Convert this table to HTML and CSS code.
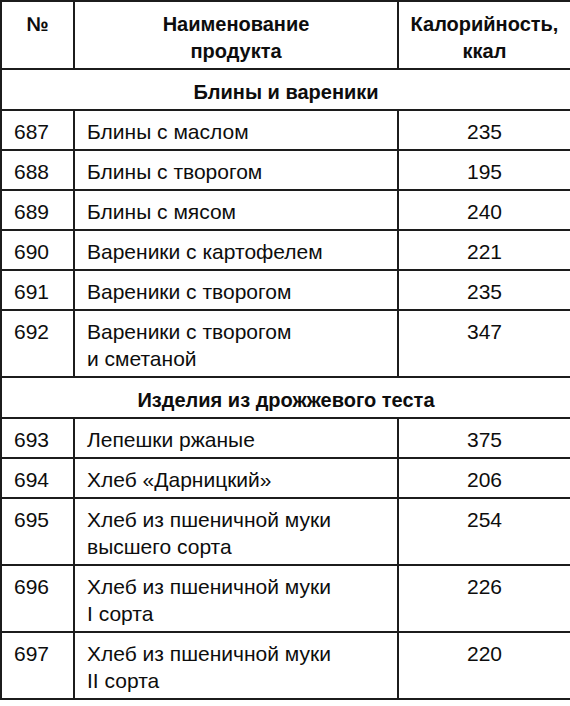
FILE: index.html
```html
<!DOCTYPE html>
<html lang="ru">
<head>
<meta charset="utf-8">
<title>Калорийность</title>
<link rel="stylesheet" href="styles.css">
</head>
<body>
<table class="cal">
  <colgroup>
    <col class="c-num">
    <col class="c-name">
    <col class="c-kcal">
  </colgroup>
  <thead>
    <tr class="head">
      <th>№</th>
      <th>Наименование<br>продукта</th>
      <th>Калорийность,<br>ккал</th>
    </tr>
  </thead>
  <tbody>
    <tr class="section"><td colspan="3">Блины и вареники</td></tr>
    <tr><td>687</td><td>Блины с маслом</td><td class="k">235</td></tr>
    <tr><td>688</td><td>Блины с творогом</td><td class="k">195</td></tr>
    <tr><td>689</td><td>Блины с мясом</td><td class="k">240</td></tr>
    <tr><td>690</td><td>Вареники с картофелем</td><td class="k">221</td></tr>
    <tr><td>691</td><td>Вареники с творогом</td><td class="k">235</td></tr>
    <tr><td>692</td><td>Вареники с творогом<br>и сметаной</td><td class="k">347</td></tr>
    <tr class="section"><td colspan="3">Изделия из дрожжевого теста</td></tr>
    <tr><td>693</td><td>Лепешки ржаные</td><td class="k">375</td></tr>
    <tr><td>694</td><td>Хлеб «Дарницкий»</td><td class="k">206</td></tr>
    <tr><td>695</td><td>Хлеб из пшеничной муки<br>высшего сорта</td><td class="k">254</td></tr>
    <tr><td>696</td><td>Хлеб из пшеничной муки<br>I сорта</td><td class="k">226</td></tr>
    <tr><td>697</td><td>Хлеб из пшеничной муки<br>II сорта</td><td class="k">220</td></tr>
  </tbody>
</table>
</body>
</html>
```
FILE: styles.css
```css
html, body {
  margin: 0;
  padding: 0;
  background: #ffffff;
}

body {
  font-family: "Liberation Sans", Arial, sans-serif;
  color: #0d0d0d;
}

.cal {
  width: 570px;
  table-layout: fixed;
  border-collapse: collapse;
}

.c-num { width: 73px; }
.c-name { width: 324px; }
.c-kcal { width: 173px; }

.cal th,
.cal td {
  border: 2px solid #1c1c1c;
  vertical-align: top;
}

.cal td {
  font-size: 21px;
  line-height: 27px;
  padding: 7px 6px 4px 12px;
  text-align: left;
}

.cal td.k {
  text-align: center;
  padding-left: 6px;
}

.head th {
  font-size: 20px;
  font-weight: bold;
  line-height: 27px;
  padding: 9px 4px 3px 4px;
  text-align: center;
  height: 54px;
}

.section td {
  font-size: 20px;
  font-weight: bold;
  text-align: center;
  padding: 9px 4px 3px 4px;
}
```
